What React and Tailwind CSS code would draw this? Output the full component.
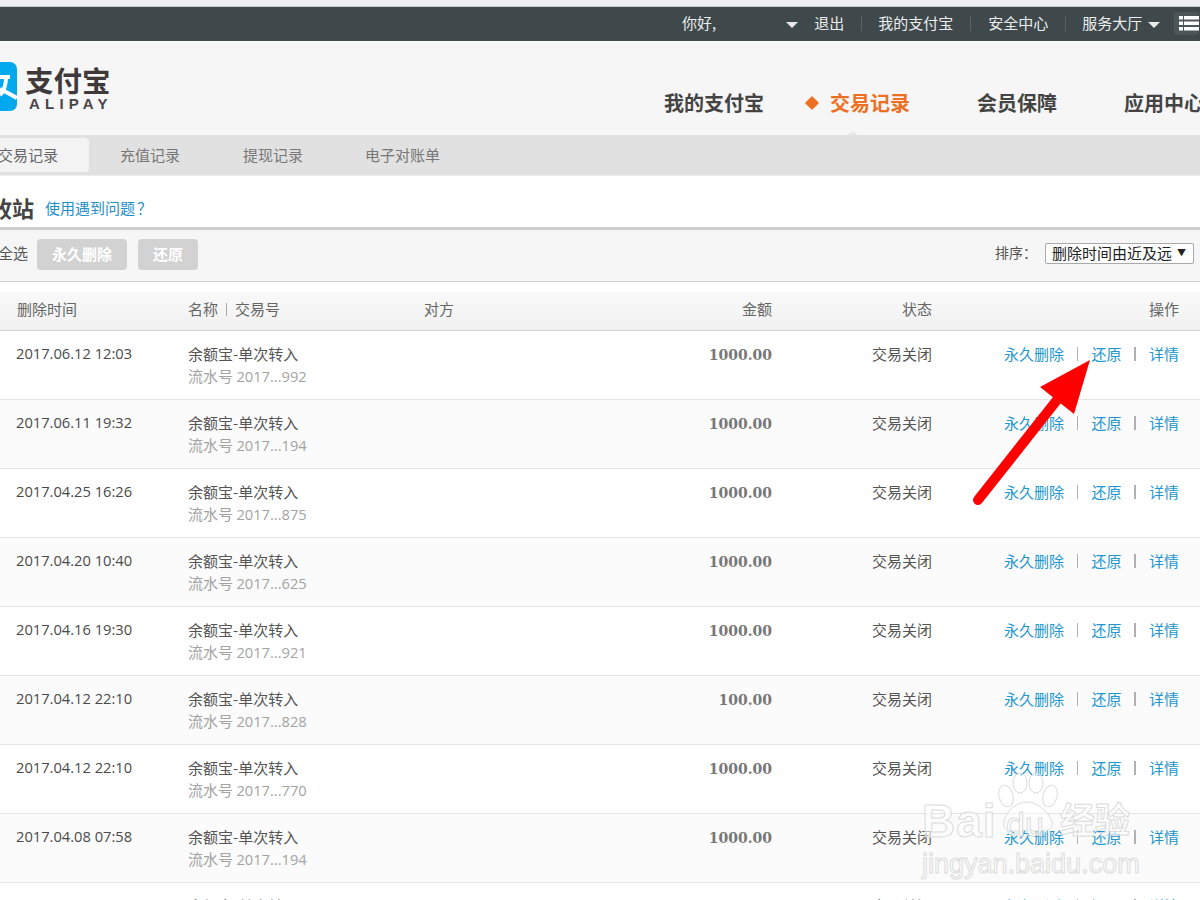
import React from 'react';

const records = [
  { time: '2017.06.12 12:03', serial: '2017...992', amount: '1000.00' },
  { time: '2017.06.11 19:32', serial: '2017...194', amount: '1000.00' },
  { time: '2017.04.25 16:26', serial: '2017...875', amount: '1000.00' },
  { time: '2017.04.20 10:40', serial: '2017...625', amount: '1000.00' },
  { time: '2017.04.16 19:30', serial: '2017...921', amount: '1000.00' },
  { time: '2017.04.12 22:10', serial: '2017...828', amount: '100.00' },
  { time: '2017.04.12 22:10', serial: '2017...770', amount: '1000.00' },
  { time: '2017.04.08 07:58', serial: '2017...194', amount: '1000.00' },
  { time: '2017.04.08 07:50', serial: '2017...310', amount: '1000.00' },
];

const Caret = () => (
  <span className="w-0 h-0 mt-[3px] border-x-[6px] border-x-transparent border-t-[6px] border-t-[#e8eaea]"></span>
);

const Sep = () => <span className="w-px h-[15px] bg-[#586265] ml-[17px]"></span>;

const ActionSep = () => <span className="w-[1.5px] h-[14px] mt-[4px] bg-[#b0b0b0]"></span>;

const Row = ({ item, index }) => (
  <div className={`grid grid-cols-[173px_235px_198px_150px_160px_247px] h-[69px] pl-4 pr-[21px] pt-3 border-b border-[#e4e4e4] leading-[21px] text-[15px] text-[#555] ${index % 2 ? 'bg-[#fbfbfb]' : 'bg-white'}`}>
    <div className="text-[14.7px] font-['Open_Sans','Noto_Sans_CJK_SC',sans-serif] text-[#4a4a4a] leading-[21px]">{item.time}</div>
    <div className="-ml-px">
      <div>余额宝-单次转入</div>
      <div className="text-[#a3a3a3] mt-px">流水号 <span className="font-['Open_Sans',sans-serif] text-[14.7px]">{item.serial}</span></div>
    </div>
    <div></div>
    <div className="text-right font-['DejaVu_Serif',serif] font-bold text-[14px] text-[#777] pt-[2px]">{item.amount}</div>
    <div className="text-right">交易关闭</div>
    <div className="flex justify-end gap-[13px] text-[#2296d0]">
      <span>永久删除</span>
      <ActionSep />
      <span>还原</span>
      <ActionSep />
      <span>详情</span>
    </div>
  </div>
);

export default function App() {
  return (
    <div className="relative w-[1200px] h-[900px] overflow-hidden bg-white font-['Noto_Sans_CJK_SC','Noto_Sans',sans-serif]">
      <div className="h-[7px] bg-[#f0eff4] border-b border-[#c9c9c9]"></div>

      {/* top bar */}
      <div className="h-[34px] bg-[#3f484b] flex items-center pl-[682px] pb-[2px] text-[15px] text-[#eceeee] whitespace-nowrap">
        <span>你好,</span>
        <span className="ml-[70px] flex"><Caret /></span>
        <span className="ml-4">退出</span>
        <Sep />
        <span className="ml-4">我的支付宝</span>
        <Sep />
        <span className="ml-[17px]">安全中心</span>
        <Sep />
        <span className="ml-4">服务大厅</span>
        <span className="ml-[6px] flex"><Caret /></span>
        <div className="ml-[14px] w-[25px] h-[23px] bg-[#4c5558] rounded-sm shrink-0 flex items-center pl-[5px]">
          <svg width="20" height="15" viewBox="0 0 20 15" fill="#fff">
            <rect x="0" y="0" width="4" height="3.5" />
            <rect x="5" y="0" width="15" height="3.5" />
            <rect x="0" y="5.5" width="4" height="3.5" />
            <rect x="5" y="5.5" width="15" height="3.5" />
            <rect x="0" y="11" width="4" height="3.5" />
            <rect x="5" y="11" width="15" height="3.5" />
          </svg>
        </div>
      </div>

      {/* logo + main nav */}
      <div className="relative mt-px h-[93px] bg-[#f6f6f6] flex whitespace-nowrap">
        <div className="relative w-[664px] shrink-0">
          <svg className="absolute left-0 top-5" width="18" height="50" viewBox="0 0 18 50">
            <path d="M-30 0H10a7 7 0 0 1 7 7V42a7 7 0 0 1-7 7H-30Z" fill="#00a9ee" />
            <path d="M0 15H10M6 15C6 24 3 30 0 33M0 27C6 30 12 33 17 36" fill="none" stroke="#fff" strokeWidth="4" />
          </svg>
          <div className="absolute left-[25px] top-[20px] text-[28.5px] leading-[36px] font-semibold text-[#3f3a39]">支付宝</div>
          <div className="absolute left-[29px] top-[54px] text-[15px] leading-[16px] font-semibold tracking-[5.2px] text-[#4a4545] font-['Liberation_Sans',sans-serif]">ALIPAY</div>
        </div>
        <div className="flex items-center pt-[28px] text-[20px] font-bold text-[#444] h-full">
          <span>我的支付宝</span>
          <span className="ml-[43px] w-[10px] h-[10px] rotate-45 rounded-[1px] bg-[#ee6f22]"></span>
          <span className="ml-[13px] text-[#ee6f22]">交易记录</span>
          <span className="ml-[67px]">会员保障</span>
          <span className="ml-[67px]">应用中心</span>
        </div>
        <span className="absolute left-[848px] bottom-0 w-0 h-0 border-x-[5px] border-x-transparent border-b-[4px] border-b-[#e9e9e9]"></span>
      </div>

      {/* sub tabs */}
      <div className="h-[41px] bg-[#e1e1e1] border-b border-[#ececec] pt-[3px] flex text-[15px] text-[#777] whitespace-nowrap">
        <div className="-ml-[33px] h-[34px] pl-[31px] pr-[31px] bg-[#f3f3f3] rounded-sm text-[#666] leading-[34px]">交易记录</div>
        <div className="px-[31px] leading-[34px]">充值记录</div>
        <div className="px-[31px] pl-[32px] leading-[34px]">提现记录</div>
        <div className="px-[31px] leading-[34px]">电子对账单</div>
      </div>

      {/* title */}
      <div className="h-[51px] flex items-center -ml-[32px] pt-[12px] whitespace-nowrap">
        <span className="text-[22px] font-bold text-[#444]">回收站</span>
        <span className="ml-[11px] text-[15px] text-[#1e8fc9] pt-[2px]">使用遇到问题<span className="ml-[2px]">？</span></span>
      </div>

      {/* toolbar */}
      <div className="h-[55px] border-t-[3px] border-b border-t-[#cdcdcd] border-b-[#d2d2d2] bg-[#f6f6f6] flex items-center -ml-[2px] pb-[3px] whitespace-nowrap">
        <span className="text-[15px] text-[#555] pb-[2px]">全选</span>
        <span className="ml-[9px] w-[90px] h-[31px] bg-[#d2d2d2] rounded-sm text-white font-bold text-[15px] leading-[29px] text-center">永久删除</span>
        <span className="ml-[11px] w-[60px] h-[31px] bg-[#d2d2d2] rounded-sm text-white font-bold text-[15px] leading-[29px] text-center">还原</span>
        <span className="ml-auto text-[14px] text-[#555] pb-[3px]">排序：</span>
        <div className="ml-[8px] mr-[6px] -mt-[2px] w-[149px] h-[21px] bg-white border border-[#aaa] rounded-[2px] flex items-center justify-between pl-[6px] pr-[7px] text-[15px] text-[#222]">
          <span>删除时间由近及远</span>
          <span className="text-[9px]">▼</span>
        </div>
      </div>

      {/* table */}
      <div className="mt-[10px]">
        <div className="grid grid-cols-[173px_235px_198px_150px_160px_247px] h-[39px] pl-4 pr-[21px] pb-[3px] items-center bg-gradient-to-b from-[#f9f9f9] to-[#f1f1f1] border-b border-[#d2d2d2] text-[15px] text-[#666]">
          <div className="pl-px">删除时间</div>
          <div className="flex items-center -ml-px">名称<span className="mx-2 w-px h-[13px] bg-[#aaa]"></span>交易号</div>
          <div>对方</div>
          <div className="text-right">金额</div>
          <div className="text-right">状态</div>
          <div className="text-right">操作</div>
        </div>
        {records.map((item, i) => (
          <Row key={i} item={item} index={i} />
        ))}
      </div>

      {/* baidu watermark */}
      <div className="absolute left-[920px] top-[770px] w-[225px] h-[110px] pointer-events-none text-white/60 [-webkit-text-stroke:1px_#dcdcdc] font-['Liberation_Sans',sans-serif] whitespace-nowrap">
        <svg className="absolute left-[72px] top-[2px]" width="70" height="62" viewBox="0 0 70 62" fill="#ffffff" fillOpacity="0.5" stroke="#dcdcdc">
          <ellipse cx="14" cy="24" rx="7" ry="11" transform="rotate(-15 14 24)" />
          <ellipse cx="28" cy="11" rx="7" ry="10" />
          <ellipse cx="44" cy="11" rx="7" ry="10" />
          <ellipse cx="58" cy="24" rx="7" ry="11" transform="rotate(15 58 24)" />
          <path d="M12 50C14 38 26 30 35 30S56 38 60 50C62 60 48 60 35 58C22 60 10 60 12 50Z" />
        </svg>
        <span className="absolute left-[2px] top-[28px] text-[46px] leading-[46px] font-bold tracking-[1px]">Bai</span>
        <span className="absolute left-[86px] top-[36px] text-[34px] leading-[36px]">du</span>
        <span className="absolute left-[140px] top-[28px] text-[35px] leading-[40px] font-bold font-['Noto_Sans_CJK_SC',sans-serif]">经验</span>
        <span className="absolute left-[2px] top-[78px] text-[27px] leading-[32px]">jingyan.baidu.com</span>
      </div>

      {/* red arrow */}
      <svg className="absolute left-0 top-0 pointer-events-none" width="1200" height="900" viewBox="0 0 1200 900">
        <path d="M978 500L1057 400" stroke="#fe0000" strokeWidth="10" strokeLinecap="round" />
        <path d="M1090 360L1040 387L1074 414Z" fill="#fe0000" />
      </svg>
    </div>
  );
}
